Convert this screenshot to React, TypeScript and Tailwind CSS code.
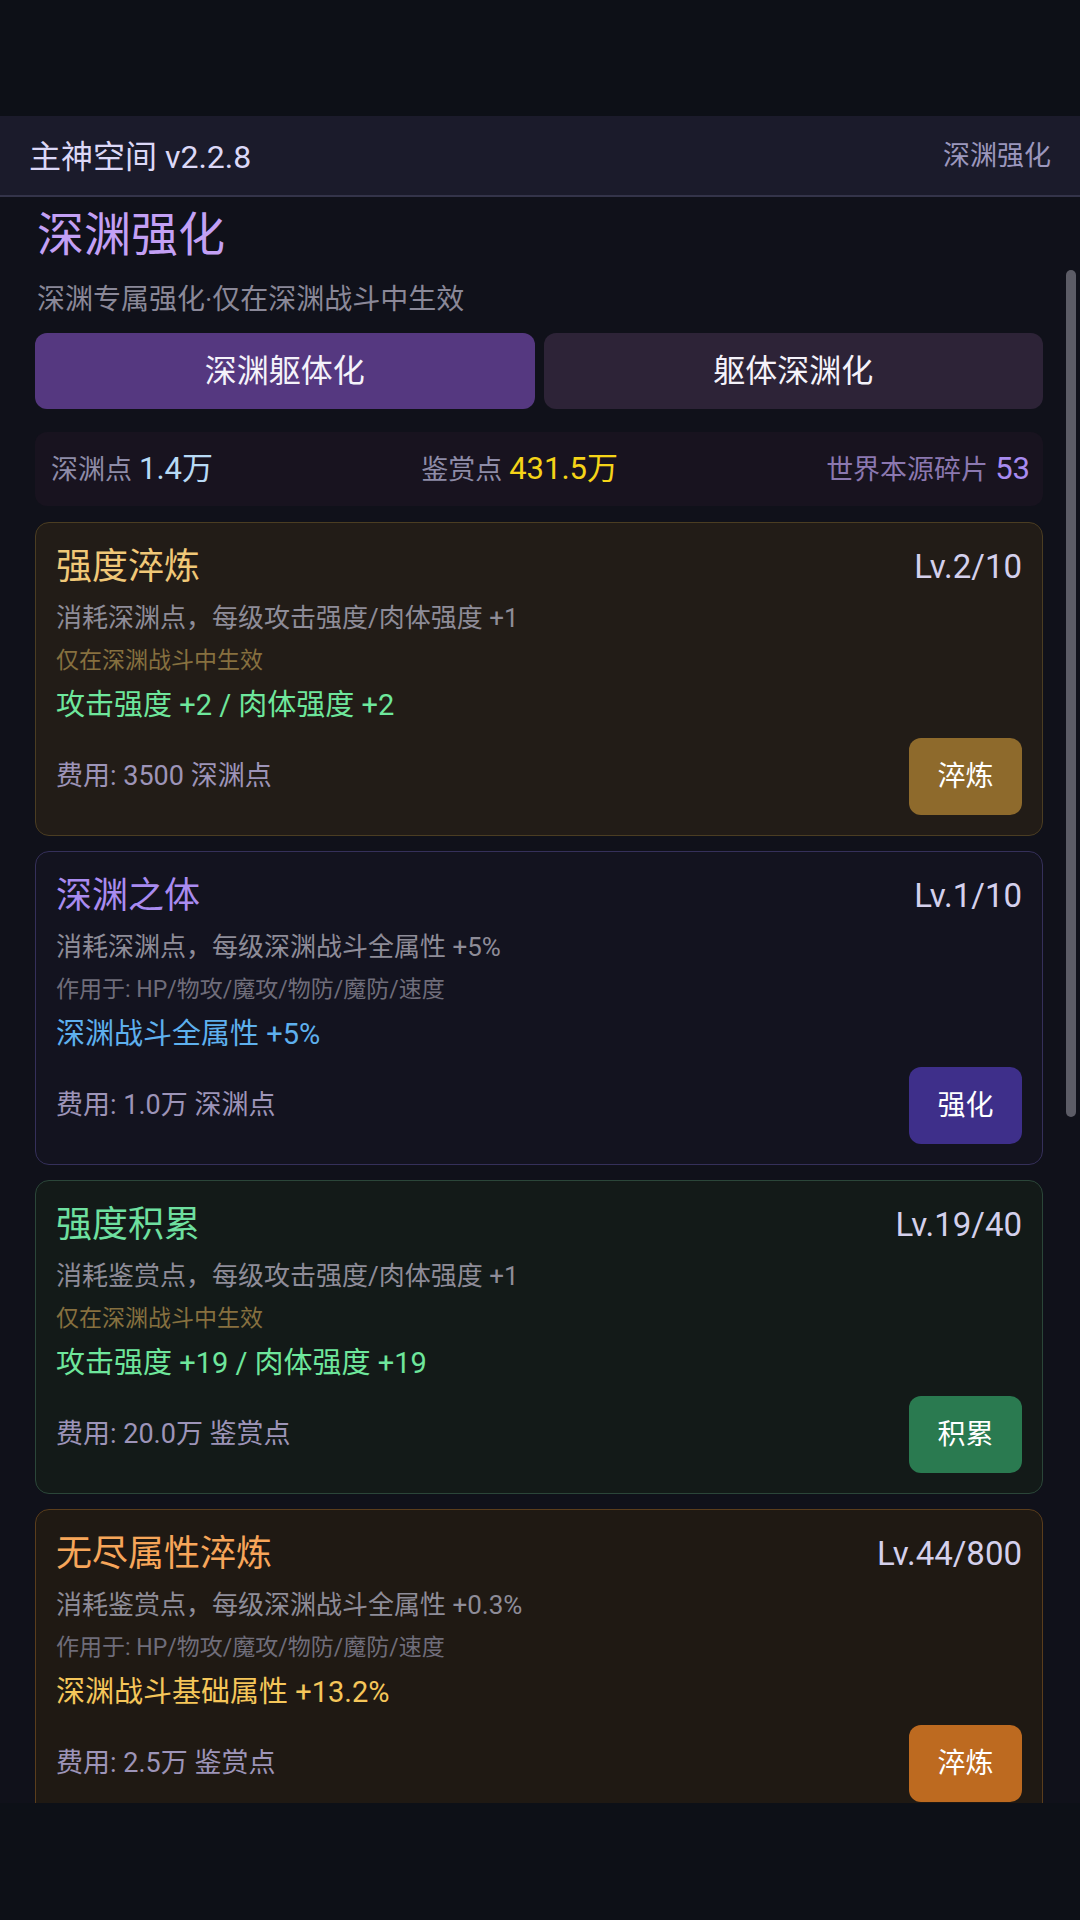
const FONT = "font-['Roboto','Noto_Sans_CJK_SC',sans-serif]";

type Upgrade = {
  title: string;
  level: string;
  desc: string;
  note: string;
  noteClass: string;
  effect: string;
  effectClass: string;
  cost: string;
  action: string;
  cardClass: string;
  titleClass: string;
  buttonClass: string;
};

const upgrades: Upgrade[] = [
  {
    title: "强度淬炼",
    level: "Lv.2/10",
    desc: "消耗深渊点，每级攻击强度/肉体强度 +1",
    note: "仅在深渊战斗中生效",
    noteClass: "text-[23px] text-[#86703f]",
    effect: "攻击强度 +2 / 肉体强度 +2",
    effectClass: "text-[#6ee79c]",
    cost: "费用: 3500 深渊点",
    action: "淬炼",
    cardClass: "bg-[#221c17] border-[#4b3d22]",
    titleClass: "text-[#f0c878]",
    buttonClass: "bg-[#8e6a2c]",
  },
  {
    title: "深渊之体",
    level: "Lv.1/10",
    desc: "消耗深渊点，每级深渊战斗全属性 +5%",
    note: "作用于: HP/物攻/魔攻/物防/魔防/速度",
    noteClass: "text-[23px] text-[#6f6d7a]",
    effect: "深渊战斗全属性 +5%",
    effectClass: "text-[#5eb0ee]",
    cost: "费用: 1.0万 深渊点",
    action: "强化",
    cardClass: "bg-[#13131f] border-[#35305a]",
    titleClass: "text-[#a98bf0]",
    buttonClass: "bg-[#3e2f8a]",
  },
  {
    title: "强度积累",
    level: "Lv.19/40",
    desc: "消耗鉴赏点，每级攻击强度/肉体强度 +1",
    note: "仅在深渊战斗中生效",
    noteClass: "text-[23px] text-[#86703f]",
    effect: "攻击强度 +19 / 肉体强度 +19",
    effectClass: "text-[#6ee79c]",
    cost: "费用: 20.0万 鉴赏点",
    action: "积累",
    cardClass: "bg-[#131a18] border-[#2b4639]",
    titleClass: "text-[#6ee0a0]",
    buttonClass: "bg-[#2a7a50]",
  },
  {
    title: "无尽属性淬炼",
    level: "Lv.44/800",
    desc: "消耗鉴赏点，每级深渊战斗全属性 +0.3%",
    note: "作用于: HP/物攻/魔攻/物防/魔防/速度",
    noteClass: "text-[23px] text-[#6f6d7a]",
    effect: "深渊战斗基础属性 +13.2%",
    effectClass: "text-[#f5c65a]",
    cost: "费用: 2.5万 鉴赏点",
    action: "淬炼",
    cardClass: "bg-[#1f1913] border-[#5a3d1c]",
    titleClass: "text-[#f7a65a]",
    buttonClass: "bg-[#bd6a20]",
  },
];

function UpgradeCard({ u }: { u: Upgrade }) {
  return (
    <div className={`rounded-[14px] border px-[20px] pt-[22px] pb-[20px] ${u.cardClass}`}>
      <div className="flex items-center justify-between leading-[44px]">
        <span className={`text-[36px] ${u.titleClass}`}>{u.title}</span>
        <span className="text-[33px] text-[#d4d0ec]">{u.level}</span>
      </div>
      <p className="mt-[12px] text-[26px] leading-[34px] text-[#8e8c98]">{u.desc}</p>
      <p className={`mt-[11px] leading-[30px] ${u.noteClass}`}>{u.note}</p>
      <p className={`mt-[11px] text-[29px] leading-[36px] ${u.effectClass}`}>{u.effect}</p>
      <div className="mt-[15px] flex items-center justify-between">
        <span className="text-[27px] text-[#9d94b8]">{u.cost}</span>
        <button className={`flex h-[77px] w-[113px] items-center justify-center rounded-[12px] text-[28px] text-white ${u.buttonClass}`}>
          {u.action}
        </button>
      </div>
    </div>
  );
}

export default function App() {
  return (
    <div className={`min-h-[1920px] w-[1080px] bg-[#0d1017] ${FONT}`}>
      <div className="h-[116px]" />
      <header className="flex h-[81px] items-center justify-between border-b-2 border-[#34344a] bg-[#1b1b2b] pl-[29px] pr-[29px]">
        <span className="pt-[2px] text-[32px] text-[#dcd8f7]">主神空间 v2.2.8</span>
        <span className="pt-[2px] text-[27px] text-[#9b97bd]">深渊强化</span>
      </header>
      <main className="relative h-[1606px] overflow-hidden bg-[#10111a]">
        <div className="pl-[35px] pr-[37px] pt-[10px]">
          <h1 className="pl-[2px] text-[47px] leading-[56px] text-[#c3a0f5]">深渊强化</h1>
          <p className="mt-[19px] pl-[2px] text-[28px] leading-[36px] text-[#8a8898]">
            深渊专属强化·仅在深渊战斗中生效
          </p>
          <div className="mt-[15px] grid grid-cols-2 gap-[9px]">
            <button className="flex h-[76px] items-center justify-center rounded-[12px] bg-[#553880] text-[32px] text-[#f4f2fa]">
              深渊躯体化
            </button>
            <button className="flex h-[76px] items-center justify-center rounded-[12px] bg-[#2d2337] text-[32px] text-[#f4f2fa]">
              躯体深渊化
            </button>
          </div>
          <div className="mt-[23px] flex h-[74px] items-center justify-between rounded-[12px] bg-[#18131f] pl-[16px] pr-[13px]">
            <span className="flex items-baseline gap-[7px]">
              <span className="text-[27px] text-[#8e8ca8]">深渊点</span>
              <span className="text-[31px] text-[#b8daf5]">1.4万</span>
            </span>
            <span className="flex items-baseline gap-[7px]">
              <span className="text-[27px] text-[#8e8ca8]">鉴赏点</span>
              <span className="text-[31px] text-[#f5d418]">431.5万</span>
            </span>
            <span className="flex items-baseline gap-[7px]">
              <span className="text-[27px] text-[#8b78b0]">世界本源碎片</span>
              <span className="text-[31px] text-[#a88bf0]">53</span>
            </span>
          </div>
          <div className="mt-[16px] flex flex-col gap-[15px]">
            {upgrades.map((u) => (
              <UpgradeCard key={u.title} u={u} />
            ))}
          </div>
        </div>
        <div className="absolute right-[4px] top-[73px] h-[847px] w-[10px] rounded-full bg-[#5c5c66]" />
      </main>
    </div>
  );
}
